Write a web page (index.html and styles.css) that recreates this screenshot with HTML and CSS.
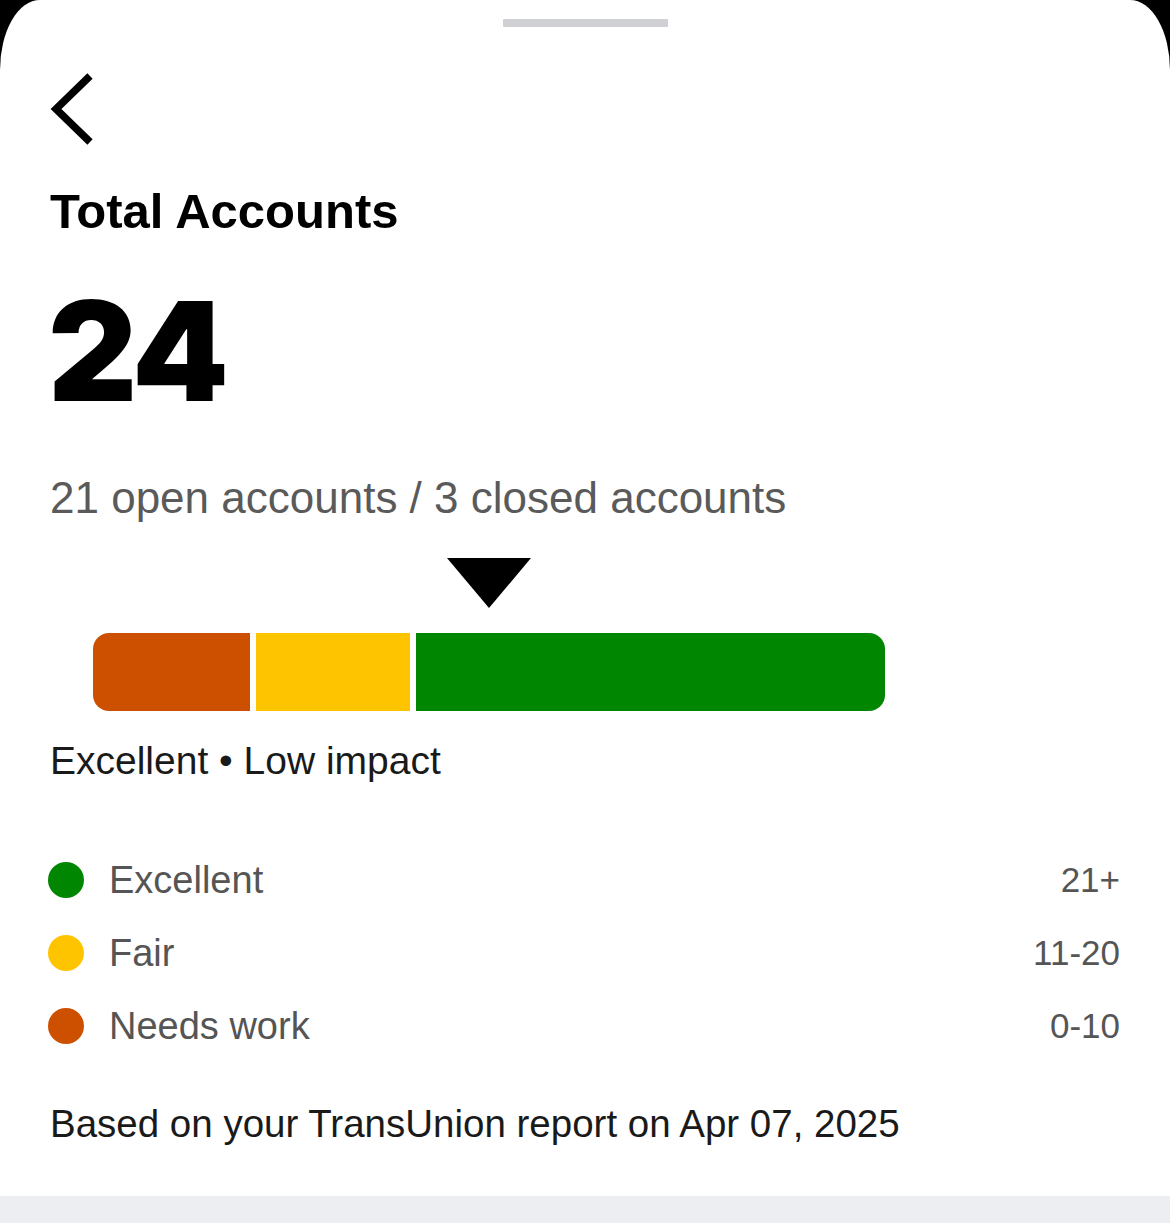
FILE: index.html
```html
<!DOCTYPE html>
<html lang="en">
<head>
<meta charset="utf-8">
<title>Total Accounts</title>
<link rel="stylesheet" href="styles.css">
</head>
<body>
<div class="sheet">
  <div class="handle"></div>
  <button class="back" aria-label="Back">
    <svg width="52" height="78" viewBox="0 0 52 78"><polyline points="44,6 10,39 44,72" fill="none" stroke="#000" stroke-width="7.5" stroke-linecap="butt" stroke-linejoin="miter"/></svg>
  </button>
  <h1 class="title">Total Accounts</h1>
  <div class="count">24</div>
  <p class="summary">21 open accounts / 3 closed accounts</p>
  <div class="meter">
    <div class="pointer-row"><span class="pointer"></span></div>
    <div class="bar">
      <span class="seg seg-orange"></span>
      <span class="seg seg-yellow"></span>
      <span class="seg seg-green"></span>
    </div>
  </div>
  <p class="rating">Excellent • Low impact</p>
  <ul class="legend">
    <li class="legend-row"><span class="dot dot-green"></span><span class="legend-label">Excellent</span><span class="legend-range">21+</span></li>
    <li class="legend-row"><span class="dot dot-yellow"></span><span class="legend-label">Fair</span><span class="legend-range">11-20</span></li>
    <li class="legend-row"><span class="dot dot-orange"></span><span class="legend-label">Needs work</span><span class="legend-range">0-10</span></li>
  </ul>
  <p class="source">Based on your TransUnion report on Apr 07, 2025</p>
</div>
<div class="band"></div>
</body>
</html>
```
FILE: styles.css
```css
* { box-sizing: border-box; }
html, body { margin: 0; padding: 0; }
body {
  background: #000;
  font-family: "Liberation Sans", Arial, sans-serif;
  color: #1a1a1a;
  width: 1170px;
  height: 1223px;
  overflow: hidden;
}
.sheet {
  background: #fff;
  border-top-left-radius: 40px 70px;
  border-top-right-radius: 40px 70px;
  padding: 19px 50px 50px;
  display: flex;
  flex-direction: column;
}
.handle {
  width: 165px;
  height: 8px;
  background: #cfd1d4;
  border-radius: 1px;
  align-self: center;
}
.back {
  margin: 43px 0 0 -4px;
  padding: 0;
  border: 0;
  background: none;
  width: 52px;
  height: 78px;
  display: block;
  align-self: flex-start;
}
.back svg { display: block; }
.title {
  margin: 35px 0 0;
  font-size: 49px;
  line-height: 56px;
  font-weight: 700;
  color: #000;
}
.count {
  margin-top: 43px;
  font-family: Inter, "Liberation Sans", sans-serif;
  font-weight: 900;
  font-size: 138px;
  line-height: 138px;
  letter-spacing: -3px;
  color: #000;
  margin-left: -2px;
}
.summary {
  margin: 52px 0 0;
  font-size: 44px;
  line-height: 52px;
  color: #5a5a5a;
}
.meter {
  margin: 34px 0 0 43px;
  width: 792px;
  display: flex;
  flex-direction: column;
  gap: 25px;
}
.pointer-row {
  display: flex;
  justify-content: center;
  height: 50px;
}
.pointer {
  width: 0;
  height: 0;
  border-left: 42px solid transparent;
  border-right: 42px solid transparent;
  border-top: 50px solid #000;
}
.bar {
  display: flex;
  gap: 6px;
  height: 78px;
  border-radius: 16px;
  overflow: hidden;
}
.seg { display: block; height: 100%; }
.seg-orange { flex: 0 0 157px; background: #cd5000; }
.seg-yellow { flex: 0 0 154px; background: #ffc400; }
.seg-green { flex: 1 1 auto; background: #008600; }
.rating {
  margin: 28px 0 0;
  font-size: 39px;
  line-height: 44px;
  color: #1a1a1a;
}
.legend {
  list-style: none;
  margin: 60px 0 0;
  padding: 0;
}
.legend-row {
  height: 73px;
  display: flex;
  align-items: center;
}
.dot {
  width: 36px;
  height: 36px;
  border-radius: 50%;
  margin-left: -2px;
  flex: 0 0 36px;
}
.dot-green { background: #008600; }
.dot-yellow { background: #ffc400; }
.dot-orange { background: #cd5000; }
.legend-label {
  margin-left: 25px;
  font-size: 38px;
  line-height: 44px;
  color: #555;
  flex: 1 1 auto;
}
.legend-range {
  font-size: 35px;
  line-height: 44px;
  color: #555;
}
.source {
  margin: 40px 0 0;
  font-size: 38.5px;
  line-height: 44px;
  color: #1a1a1a;
}
.band {
  height: 27px;
  background: #eceef1;
}
```
